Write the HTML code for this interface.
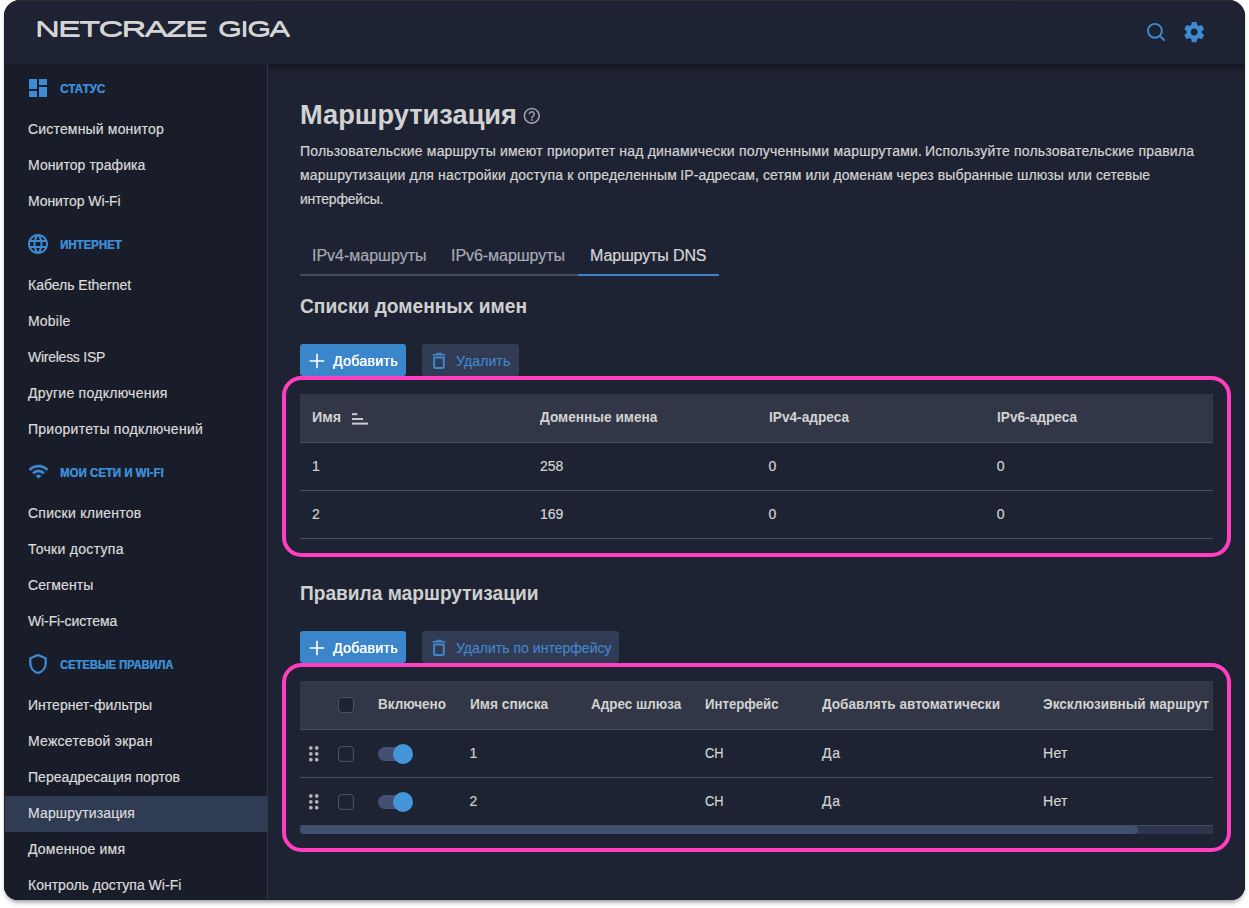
<!DOCTYPE html>
<html lang="ru">
<head>
<meta charset="utf-8">
<title>Netcraze Giga — Маршрутизация</title>
<style>
*{box-sizing:border-box;margin:0;padding:0}
html,body{width:1249px;height:908px;overflow:hidden;background:#fff}
body{font-family:"Liberation Sans",Arial,sans-serif;font-size:14px;color:#d4d4d4;position:relative}
span{white-space:nowrap}
.frame{position:absolute;left:4px;top:0;width:1241px;height:899.7px;border-radius:16px 16px 14px 14px;background:#1e2333;overflow:hidden;box-shadow:0 0 2px rgba(0,0,0,.08),0 4px 5px -2px rgba(0,0,0,.42)}
.frame::after{content:"";position:absolute;left:0;top:0;right:0;bottom:0;border:1px solid rgba(32,32,36,.85);border-top-color:rgba(48,48,50,.95);border-radius:16px 16px 14px 14px;z-index:10}
.page{position:absolute;left:-4px;top:0;width:1249px;height:908px}
.abs{position:absolute}
/* header */
.hdr{position:absolute;left:0;top:0;width:1249px;height:64px;background:#1e2333;z-index:5}
.logo{position:absolute;left:35px;top:16.4px;font-size:22.6px;line-height:26px;letter-spacing:-1.2px;color:#d4d4d4;text-shadow:0 1.1px 0 #d4d4d4}
/* sidebar */
.side{position:absolute;left:0;top:64px;width:268px;height:844px;background:#191d29;border-right:1px solid #303749}
.sec{position:relative;height:48px;line-height:50px;padding-left:60px;font-size:13px;font-weight:700;color:#3d8bd2;text-shadow:.3px 0 0 #3d8bd2}
.sec svg{position:absolute}
.it{height:36px;line-height:35px;padding-left:28px;font-size:14px;color:#dadada;-webkit-text-stroke:.2px #dadada}
.it.act{background:#303b54}
/* main */
.main{position:absolute;left:268px;top:64px;width:981px;height:844px;background:#1e2333}
.main i{position:absolute;left:0;top:0;width:100%;height:14px;background:linear-gradient(rgba(8,10,20,.5),rgba(8,10,20,.33) 20%,rgba(8,10,20,.19) 45%,rgba(8,10,20,.08) 70%,rgba(8,10,20,.025) 88%,rgba(8,10,20,0))}
h1{position:absolute;left:300px;top:96.7px;font-size:28px;line-height:36px;font-weight:700;color:#d2d2d2}
.desc{position:absolute;left:300px;top:139px;font-size:14px;line-height:24px;color:#d3d3d3;-webkit-text-stroke:.2px #d3d3d3}
.tabs{position:absolute;left:300px;top:235.6px;height:40px;width:419px;border-bottom:2px solid #454b5a}
.tab{position:absolute;top:0;height:40px;line-height:39px;font-size:16px;color:#a6aab3;-webkit-text-stroke:.2px #a6aab3}
.tab.on{color:#d6d6d6;-webkit-text-stroke:.2px #d6d6d6}
.tabs i{position:absolute;left:278px;bottom:-2px;width:141px;height:2px;background:#3b80c4}
h2{position:absolute;left:300px;font-size:20px;line-height:28px;font-weight:700;color:#cfcfcf}
.btn{position:absolute;height:32px;line-height:34px;border-radius:3px;font-size:14px}
.btn.pri{background:#3b86ca;color:#fff;text-shadow:.2px 0 0 #fff}
.btn.dis{background:#313b54;color:#4285c9;-webkit-text-stroke:.2px #4285c9}
.btn span{position:absolute;top:0}
.btn svg{position:absolute}
.pink{position:absolute;border:4.4px solid #ff3fbf;border-radius:19.5px;z-index:3}
.tbl{position:absolute;left:300px;width:913px}
.th{position:absolute;left:0;top:0;width:913px;height:49px;background:#313746;border-bottom:1px solid #474d5c;font-weight:700;color:#d2d2d2;line-height:47px}
.tr{position:absolute;left:0;width:913px;height:48px;border-bottom:1px solid #474d5c;color:#d2d2d2;line-height:47px;-webkit-text-stroke:.2px #d2d2d2}
.th span,.tr span{position:absolute;top:0}
.cb{position:absolute;width:16px;height:16px;border:1px solid #465370;border-radius:4px}
.tog{position:absolute;width:34.4px;height:14px;border-radius:7px;background:#445072}
.tog b{position:absolute;right:-0.5px;top:-3px;width:20px;height:20px;border-radius:50%;background:#4496d8}
</style>
</head>
<body>
<div class="frame"><div class="page">

<div class="hdr">
  <div class="logo"><span style="display:inline-block;transform:scaleX(1.5271);transform-origin:0 50%">NETCRAZE</span></div><div class="logo" style="left:217.6px"><span style="display:inline-block;transform:scaleX(1.3636);transform-origin:0 50%">GIGA</span></div>
  <svg class="abs" style="left:1144px;top:20px" width="24" height="24" viewBox="0 0 24 24" fill="none" stroke="#3d8bd2" stroke-width="1.9" stroke-linecap="round"><circle cx="10.9" cy="10.8" r="6.95"/><path d="M16 16L20.2 20.1"/></svg>
  <svg class="abs" style="left:1181.8px;top:19.8px" width="24.4" height="24.2" viewBox="0 0 24 24" fill="#3d8bd2"><path d="M19.43 12.98c.04-.32.07-.64.07-.98s-.03-.66-.07-.98l2.11-1.65c.19-.15.24-.42.12-.64l-2-3.46c-.12-.22-.39-.3-.61-.22l-2.49 1c-.52-.4-1.08-.73-1.69-.98l-.38-2.65C14.46 2.180 14.250 2 14 2h-4c-.25 0-.46.180-.49.420l-.38 2.650c-.61.250-1.170.590-1.690.980l-2.490-1c-.23-.090-.490 0-.610.220l-2 3.460c-.130.220-.070.490.120.640l2.110 1.650c-.040.320-.070.650-.070.980s.030.660.070.980l-2.110 1.650c-.190.150-.240.420-.120.640l2 3.460c.120.220.390.300.610.220l2.490-1c.520.400 1.080.730 1.690.980l.380 2.650c.030.240.240.420.490.420h4c.250 0 .460-.180.490-.420l.380-2.650c.610-.250 1.170-.590 1.690-.980l2.490 1c.230.090.490 0 .610-.220l2-3.460c.120-.220.070-.490-.120-.640l-2.110-1.650zM12 15.500c-1.930 0-3.500-1.570-3.500-3.500s1.570-3.500 3.500-3.500 3.500 1.570 3.500 3.500-1.570 3.500-3.500 3.500z"/></svg>
</div>

<div class="side">
  <div class="sec"><svg style="left:26px;top:12px" width="24" height="24" viewBox="0 0 24 24" fill="#3d8bd2"><path d="M3 13h8V3H3v10zm0 8h8v-6H3v6zm10 0h8V11h-8v10zm0-18v6h8V3h-8z"/></svg><span style="display:inline-block;transform:scaleX(0.8978);transform-origin:0 50%">СТАТУС</span></div>
  <div class="it"><span style="letter-spacing:0.176px">Системный монитор</span></div>
  <div class="it"><span style="letter-spacing:0.063px">Монитор трафика</span></div>
  <div class="it"><span style="letter-spacing:-0.078px">Монитор Wi-Fi</span></div>
  <div class="sec"><svg style="left:26px;top:12px" width="24" height="24" viewBox="0 0 24 24" fill="#3d8bd2"><path d="M11.99 2C6.47 2 2 6.48 2 12s4.47 10 9.99 10C17.52 22 22 17.52 22 12S17.52 2 11.99 2zm6.93 6h-2.950c-.320-1.250-.780-2.450-1.380-3.560 1.840.630 3.370 1.910 4.330 3.560zM12 4.040c.830 1.200 1.480 2.530 1.910 3.960h-3.820c.430-1.430 1.080-2.760 1.910-3.960zM4.260 14C4.100 13.360 4 12.690 4 12s.100-1.360.260-2h3.380c-.080.660-.140 1.320-.140 2 0 .680.060 1.340.140 2H4.260zm.820 2h2.950c.320 1.250.780 2.450 1.380 3.560-1.840-.630-3.370-1.900-4.330-3.560zm2.950-8H5.080c.960-1.660 2.490-2.930 4.330-3.560C8.810 5.550 8.350 6.750 8.030 8zM12 19.960c-.830-1.200-1.480-2.530-1.910-3.960h3.820c-.430 1.430-1.080 2.760-1.910 3.960zM14.340 14H9.660c-.090-.660-.160-1.320-.160-2 0-.680.070-1.350.160-2h4.680c.090.650.160 1.320.160 2 0 .680-.070 1.340-.160 2zm.250 5.560c.600-1.110 1.060-2.310 1.380-3.560h2.950c-.960 1.650-2.490 2.930-4.330 3.560zM16.360 14c.080-.660.140-1.320.140-2 0-.680-.060-1.340-.140-2h3.380c.160.640.260 1.310.260 2s-.100 1.360-.260 2h-3.380z"/></svg><span style="display:inline-block;transform:scaleX(0.8798);transform-origin:0 50%">ИНТЕРНЕТ</span></div>
  <div class="it"><span style="letter-spacing:-0.022px">Кабель Ethernet</span></div>
  <div class="it"><span style="letter-spacing:0.210px">Mobile</span></div>
  <div class="it"><span style="letter-spacing:-0.257px">Wireless ISP</span></div>
  <div class="it"><span style="letter-spacing:0.270px">Другие подключения</span></div>
  <div class="it"><span style="letter-spacing:0.261px">Приоритеты подключений</span></div>
  <div class="sec"><svg style="left:27.700px;top:12.900px" width="21" height="21" viewBox="0 0 24 24" fill="#3d8bd2" stroke="#3d8bd2" stroke-width=".5"><path d="M1 9l2 2c4.970-4.970 13.030-4.970 18 0l2-2C16.930 2.930 7.080 2.930 1 9zm8 8l3 3 3-3c-1.650-1.660-4.340-1.660-6 0zm-4-4l2 2c2.760-2.760 7.240-2.760 10 0l2-2C15.140 9.140 8.870 9.140 5 13z"/></svg><span style="display:inline-block;transform:scaleX(0.8811);transform-origin:0 50%">МОИ СЕТИ И WI-FI</span></div>
  <div class="it"><span style="letter-spacing:0.262px">Списки клиентов</span></div>
  <div class="it"><span style="letter-spacing:0.294px">Точки доступа</span></div>
  <div class="it"><span style="letter-spacing:0.111px">Сегменты</span></div>
  <div class="it"><span style="letter-spacing:-0.116px">Wi-Fi-система</span></div>
  <div class="sec"><svg style="left:28px;top:13px" width="20" height="22" viewBox="0 0 20 22" fill="none" stroke="#3d8bd2" stroke-width="2.300" stroke-linejoin="round"><path d="M10 1.950L17.700 5.200V10.200C17.700 14.800 14.500 18.800 10 20C5.500 18.800 2.300 14.800 2.300 10.200V5.200Z"/></svg><span style="display:inline-block;transform:scaleX(0.8546);transform-origin:0 50%">СЕТЕВЫЕ ПРАВИЛА</span></div>
  <div class="it"><span style="letter-spacing:0.019px">Интернет-фильтры</span></div>
  <div class="it"><span style="letter-spacing:0.258px">Межсетевой экран</span></div>
  <div class="it"><span style="letter-spacing:0.033px">Переадресация портов</span></div>
  <div class="it act"><span style="letter-spacing:0.149px">Маршрутизация</span></div>
  <div class="it"><span style="letter-spacing:0.200px">Доменное имя</span></div>
  <div class="it"><span style="letter-spacing:0.008px">Контроль доступа Wi-Fi</span></div>
</div>

<div class="main"><i></i></div>

<h1><span style="display:inline-block;transform:scaleX(0.9725);transform-origin:0 50%">Маршрутизация</span></h1>
<svg class="abs" style="left:522.3px;top:106.3px" width="19.6" height="19.6" viewBox="0 0 24 24" fill="#9a9fa9"><path d="M11 18h2v-2h-2v2zm1-16C6.480 2 2 6.480 2 12s4.480 10 10 10 10-4.480 10-10S17.520 2 12 2zm0 18c-4.410 0-8-3.590-8-8s3.590-8 8-8 8 3.590 8 8-3.590 8-8 8zm0-14c-2.210 0-4 1.790-4 4h2c0-1.100.900-2 2-2s2 .900 2 2c0 2-3 1.750-3 5h2c0-2.250 3-2.500 3-5 0-2.210-1.790-4-4-4z"/></svg>

<div class="desc"><span style="display:inline-block;width:625px"><span style="letter-spacing:0.197px">Пользовательские маршруты имеют приоритет над динамически полученными маршрутами.</span></span><span style="letter-spacing:0.201px">Используйте пользовательские правила</span><br><span style="display:inline-block;width:380.300px"><span style="letter-spacing:0.179px">маршрутизации для настройки доступа к определенным</span></span><span style="letter-spacing:0.093px">IP-адресам, сетям или доменам через выбранные шлюзы или сетевые</span><br><span style="letter-spacing:-0.197px">интерфейсы.</span></div>

<div class="tabs">
  <span class="tab" style="left:12px"><span style="letter-spacing:-0.003px">IPv4-маршруты</span></span>
  <span class="tab" style="left:151px"><span style="letter-spacing:-0.044px">IPv6-маршруты</span></span>
  <span class="tab on" style="left:290px"><span style="letter-spacing:-0.129px">Маршруты DNS</span></span>
  <i></i>
</div>

<h2 style="top:292px"><span style="display:inline-block;transform:scaleX(0.9595);transform-origin:0 50%">Списки доменных имен</span></h2>

<div class="btn pri" style="left:300px;top:344px;width:106px"><svg style="left:9px;top:9px" width="16" height="16" viewBox="0 0 16 16" stroke="#fff" stroke-width="1.6" fill="none"><path d="M8 .7v14.600M.7 8h14.600"/></svg><span style="left:33px"><span style="letter-spacing:0.375px">Добавить</span></span></div>
<div class="btn dis" style="left:422px;top:344px;width:97px"><svg style="left:10px;top:8px" width="14" height="18" viewBox="0 0 14 18" fill="#4285c9"><rect x="4.2" y="0.800" width="5.600" height="1.600" rx=".6"/><rect x=".4" y="1.900" width="12.900" height="1.700" rx=".4"/><path d="M2.100 5.400V14.600Q2.100 16.100 3.600 16.100H10.300Q11.800 16.100 11.800 14.600V5.400Z" fill="none" stroke="#4285c9" stroke-width="2"/></svg><span style="left:34px"><span style="letter-spacing:0.124px">Удалить</span></span></div>

<div class="pink" style="left:282px;top:376px;width:949px;height:181px"></div>
<div class="tbl" style="top:394px;height:145px">
  <div class="th"><span style="left:12px"><span style="display:inline-block;transform:scaleX(1.0212);transform-origin:0 50%">Имя</span></span><svg class="abs" style="left:52px;top:19px" width="17" height="12" viewBox="0 0 17 12" fill="#cbcdd4"><rect x="0" y=".200" width="5.300" height="2"/><rect x="0" y="5" width="11" height="2"/><rect x="0" y="9.600" width="16.100" height="2"/></svg><span style="left:240px"><span style="display:inline-block;transform:scaleX(0.9775);transform-origin:0 50%">Доменные имена</span></span><span style="left:468.500px"><span style="display:inline-block;transform:scaleX(0.9752);transform-origin:0 50%">IPv4-адреса</span></span><span style="left:696.700px"><span style="display:inline-block;transform:scaleX(0.9752);transform-origin:0 50%">IPv6-адреса</span></span></div>
  <div class="tr" style="top:49px"><span style="left:12px">1</span><span style="left:240px">258</span><span style="left:468.500px">0</span><span style="left:696.700px">0</span></div>
  <div class="tr" style="top:97px"><span style="left:12px">2</span><span style="left:240px">169</span><span style="left:468.500px">0</span><span style="left:696.700px">0</span></div>
</div>

<h2 style="top:579px"><span style="display:inline-block;transform:scaleX(0.9566);transform-origin:0 50%">Правила маршрутизации</span></h2>

<div class="btn pri" style="left:300px;top:631px;width:106px"><svg style="left:9px;top:9px" width="16" height="16" viewBox="0 0 16 16" stroke="#fff" stroke-width="1.6" fill="none"><path d="M8 .7v14.600M.7 8h14.600"/></svg><span style="left:33px"><span style="letter-spacing:0.375px">Добавить</span></span></div>
<div class="btn dis" style="left:422px;top:631px;width:197px"><svg style="left:10px;top:8px" width="14" height="18" viewBox="0 0 14 18" fill="#4285c9"><rect x="4.2" y="0.800" width="5.600" height="1.600" rx=".6"/><rect x=".4" y="1.900" width="12.900" height="1.700" rx=".4"/><path d="M2.100 5.400V14.600Q2.100 16.100 3.600 16.100H10.300Q11.800 16.100 11.800 14.600V5.400Z" fill="none" stroke="#4285c9" stroke-width="2"/></svg><span style="left:34px"><span style="letter-spacing:0.020px">Удалить по интерфейсу</span></span></div>

<div class="pink" style="left:282px;top:662.900px;width:949px;height:189.100px"></div>
<div class="tbl" style="top:681px;height:154px">
  <div class="th"><div class="cb" style="left:38px;top:16px;background:#1e2333"></div><span style="left:78px"><span style="display:inline-block;transform:scaleX(0.9641);transform-origin:0 50%">Включено</span></span><span style="left:169.500px"><span style="display:inline-block;transform:scaleX(0.9786);transform-origin:0 50%">Имя списка</span></span><span style="left:291px"><span style="display:inline-block;transform:scaleX(0.9605);transform-origin:0 50%">Адрес шлюза</span></span><span style="left:405px"><span style="display:inline-block;transform:scaleX(0.9427);transform-origin:0 50%">Интерфейс</span></span><span style="left:522px"><span style="display:inline-block;transform:scaleX(0.9686);transform-origin:0 50%">Добавлять автоматически</span></span><span style="left:743px"><span style="display:inline-block;transform:scaleX(0.9705);transform-origin:0 50%">Эксклюзивный маршрут</span></span></div>
  <div class="tr" style="top:49px"><svg class="abs" style="left:2.200px;top:11.800px" width="23.600" height="23.600" viewBox="0 0 24 24" fill="#b4b4b4"><circle cx="9" cy="6" r="1.900"/><circle cx="15" cy="6" r="1.900"/><circle cx="9" cy="12" r="1.900"/><circle cx="15" cy="12" r="1.900"/><circle cx="9" cy="18" r="1.900"/><circle cx="15" cy="18" r="1.900"/></svg><div class="cb" style="left:38px;top:16px"></div><div class="tog" style="left:78px;top:17px"><b></b></div><span style="left:169.500px">1</span><span style="left:405px"><span style="display:inline-block;transform:scaleX(0.9143);transform-origin:0 50%">CH</span></span><span style="left:522px"><span style="letter-spacing:0.719px">Да</span></span><span style="left:743px"><span style="letter-spacing:0.328px">Нет</span></span></div>
  <div class="tr" style="top:97px"><svg class="abs" style="left:2.200px;top:11.800px" width="23.600" height="23.600" viewBox="0 0 24 24" fill="#b4b4b4"><circle cx="9" cy="6" r="1.900"/><circle cx="15" cy="6" r="1.900"/><circle cx="9" cy="12" r="1.900"/><circle cx="15" cy="12" r="1.900"/><circle cx="9" cy="18" r="1.900"/><circle cx="15" cy="18" r="1.900"/></svg><div class="cb" style="left:38px;top:16px"></div><div class="tog" style="left:78px;top:17px"><b></b></div><span style="left:169.500px">2</span><span style="left:405px"><span style="display:inline-block;transform:scaleX(0.9143);transform-origin:0 50%">CH</span></span><span style="left:522px"><span style="letter-spacing:0.719px">Да</span></span><span style="left:743px"><span style="letter-spacing:0.328px">Нет</span></span></div>
  <div class="abs" style="left:0;top:145px;width:913px;height:8px;background:#2d364c"></div>
  <div class="abs" style="left:0;top:145px;width:837.500px;height:8px;background:#425070;border-radius:4px"></div>
</div>

</div></div>
</body>
</html>
